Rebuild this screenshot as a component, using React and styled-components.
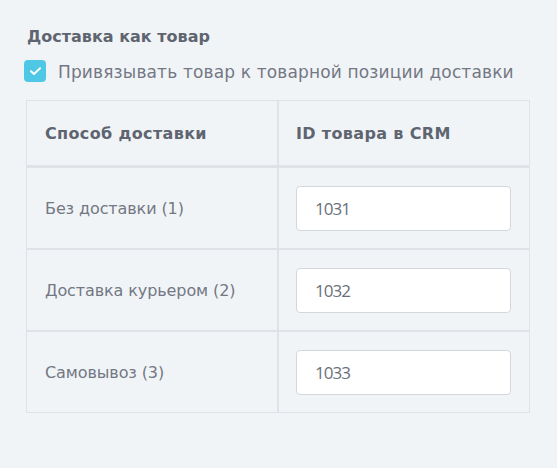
import React from 'react';
import styled, { createGlobalStyle } from 'styled-components';

const GlobalStyle = createGlobalStyle`
  html, body {
    margin: 0;
    padding: 0;
    background: #f1f4f7;
  }
  body {
    font-family: "DejaVu Sans", "Noto Sans", sans-serif;
  }
`;

const Page = styled.div`
  width: 557px;
  height: 468px;
  box-sizing: border-box;
  padding: 26px 0 0 26px;
  background: #f1f4f7;
`;

const Title = styled.h3`
  margin: 0 0 0 1px;
  padding-top: 1px;
  font-size: 16px;
  font-weight: 700;
  line-height: 20px;
  color: #5f6570;
`;

const CheckRow = styled.label`
  display: flex;
  align-items: center;
  gap: 12px;
  margin: 13px 0 18px -2px;
  height: 22px;
  font-size: 17px;
  letter-spacing: 0.15px;
  color: #737884;
  cursor: pointer;
`;

const LabelText = styled.span`
  line-height: 19px;
  padding-top: 3px;
`;

const Box = styled.span`
  width: 22px;
  height: 22px;
  border-radius: 4px;
  background: #4ec8e4;
  display: flex;
  align-items: center;
  justify-content: center;
  flex-shrink: 0;
`;

const Table = styled.div`
  width: 504px;
  border: 1px solid #dfe3e7;
  box-sizing: border-box;
  display: grid;
  grid-template-columns: 252px 250px;
`;

const Cell = styled.div`
  height: ${(p) => (p.$head ? '64px' : '80px')};
  display: flex;
  align-items: center;
  padding: 0 ${(p) => (p.$left ? '18px' : '17px')};
  border-bottom: ${(p) => (p.$last ? 'none' : `${p.$head ? 3 : 2}px solid #dfe3e7`)};
  border-right: ${(p) => (p.$left ? '2px solid #dfe3e7' : 'none')};
  font-size: 16px;
  letter-spacing: ${(p) => (p.$head ? '0.35px' : '-0.1px')};
  font-weight: ${(p) => (p.$head ? 700 : 400)};
  color: ${(p) => (p.$head ? '#5f6570' : '#737884')};
`;

const Input = styled.input`
  width: 215px;
  height: 45px;
  box-sizing: border-box;
  border: 1px solid #d3d7dc;
  border-radius: 4px;
  background: #fff;
  padding: 0 18px;
  font-family: "Open Sans", sans-serif;
  font-size: 17px;
  letter-spacing: -1px;
  color: #6b707b;
  outline: none;
`;

const rows = [
  { name: 'Без доставки (1)', id: '1031' },
  { name: 'Доставка курьером (2)', id: '1032' },
  { name: 'Самовывоз (3)', id: '1033' },
];

const Check = () => (
  <svg width="13" height="10" viewBox="0 0 13 10">
    <path d="M2 5.2 L5 8 L11 2.2" fill="none" stroke="#fff" strokeWidth="2" strokeLinecap="round" strokeLinejoin="round" />
  </svg>
);

export default function App() {
  return (
    <Page>
      <GlobalStyle />
      <Title>Доставка как товар</Title>
      <CheckRow>
        <Box><Check /></Box>
        <LabelText>Привязывать товар к товарной позиции доставки</LabelText>
      </CheckRow>
      <Table>
        <Cell $head $left>Способ доставки</Cell>
        <Cell $head>ID товара в CRM</Cell>
        {rows.map((r, i) => (
          <React.Fragment key={r.id}>
            <Cell $left $last={i === rows.length - 1}>{r.name}</Cell>
            <Cell $last={i === rows.length - 1}>
              <Input defaultValue={r.id} />
            </Cell>
          </React.Fragment>
        ))}
      </Table>
    </Page>
  );
}
